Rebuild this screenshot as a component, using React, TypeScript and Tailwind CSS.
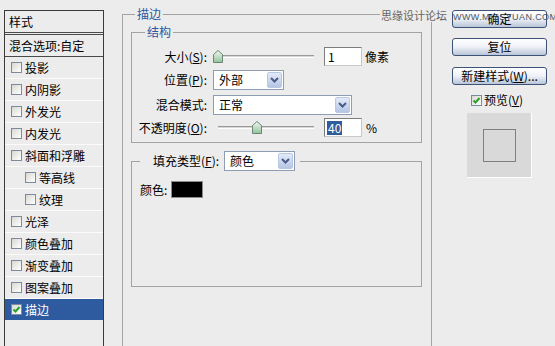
const styleItems = [
  { label: '投影' },
  { label: '内阴影' },
  { label: '外发光' },
  { label: '内发光' },
  { label: '斜面和浮雕' },
  { label: '等高线', sub: true },
  { label: '纹理', sub: true },
  { label: '光泽' },
  { label: '颜色叠加' },
  { label: '渐变叠加' },
  { label: '图案叠加' },
];

const CheckBox = ({ checked }: { checked?: boolean }) => (
  <span className="w-[11px] h-[11px] shrink-0 border border-[#7b8a9c] bg-linear-to-br from-[#d8d8d2] to-white flex items-center justify-center">
    {checked && (
      <svg width="9" height="9" viewBox="0 0 9 9">
        <path d="M1.5 4.5 L3.5 6.5 L7.5 2" fill="none" stroke="#2aa02a" strokeWidth="2" />
      </svg>
    )}
  </span>
);

const Chevron = () => (
  <svg width="9" height="6" viewBox="0 0 9 6">
    <path d="M1 1 L4.5 4.5 L8 1" fill="none" stroke="#4a5c86" strokeWidth="2" />
  </svg>
);

const Select = ({ value, width }: { value: string; width: string }) => (
  <div className={`${width} h-[20px] shrink-0 border border-[#8f9db3] bg-white flex items-center`}>
    <span className="flex-1 pl-[5px] leading-[16px]">{value}</span>
    <span className="w-[15px] h-[16px] mr-[1px] rounded-[2px] border border-[#b9c8e2] bg-linear-to-b from-[#e3ebf8] to-[#b4c5e4] flex items-center justify-center">
      <Chevron />
    </span>
  </div>
);

const Thumb = () => (
  <svg width="10" height="13" viewBox="0 0 10 13">
    <defs>
      <linearGradient id="tg" x1="0" y1="0" x2="0" y2="1">
        <stop offset="0" stopColor="#f4f8f2" />
        <stop offset="1" stopColor="#8fc49a" />
      </linearGradient>
    </defs>
    <path d="M0.5 12.5 V4.5 L5 0.5 L9.5 4.5 V12.5 Z" fill="url(#tg)" stroke="#6d8577" />
  </svg>
);

const Slider = ({ trackStart, thumbAt }: { trackStart: string; thumbAt: string }) => (
  <div className="relative w-[101px] h-[19px] shrink-0">
    <div className={`absolute ${trackStart} right-0 top-[8px] h-[3px] border-t border-[#9a9a9a] border-b border-b-white bg-[#d6d6d6]`} />
    <div className={`absolute ${thumbAt} top-[3px]`}>
      <Thumb />
    </div>
  </div>
);

const TextBox = ({ value, selected }: { value: string; selected?: boolean }) => (
  <div className="w-[38px] h-[19px] shrink-0 border border-[#7c7c7c] border-r-[#c8c8c8] border-b-[#c8c8c8] bg-white flex items-center pl-[2px]">
    <span className={selected ? 'bg-[#2f5c9c] text-white leading-[14px] px-[1px]' : 'leading-[14px] px-[1px]'}>{value}</span>
  </div>
);

const Button = ({ children, top }: { children: React.ReactNode; top: string }) => (
  <div className={`${top} w-[95px] h-[18px] rounded-[3px] border border-[#3d5277] bg-linear-to-b from-white via-[#eef1f6] to-[#b9c5d8] flex items-center justify-center leading-[14px]`}>
    {children}
  </div>
);

export default function App() {
  return (
    <div className="relative w-[555px] h-[346px] overflow-hidden bg-[#ececec] flex text-[12px] text-black font-['Noto_Sans_CJK_SC','Liberation_Sans',sans-serif]">
      {/* style list */}
      <div className="w-[104px] pl-[4px] pt-[10px] flex flex-col">
        <div className="flex-1 w-[100px] border border-b-0 border-[#3a3a3a] flex flex-col">
          <div className="h-[21px] pl-[4px] flex items-center leading-[14px]">样式</div>
          <div className="h-[3px] border-y border-[#4a4a4a]" />
          <div className="h-[22px] pl-[4px] border-b border-[#4a4a4a] flex items-center leading-[14px]">混合选项:自定</div>
          {styleItems.map((item) => (
            <div
              key={item.label}
              className={`h-[22px] border-b border-[#fbfbfb] flex items-center gap-[3px] leading-[14px] ${item.sub ? 'pl-[20px]' : 'pl-[6px]'}`}
            >
              <CheckBox />
              <span>{item.label}</span>
            </div>
          ))}
          <div className="h-[21px] bg-[#2e5b9f] text-white flex items-center gap-[3px] pl-[6px] leading-[14px]">
            <CheckBox checked />
            <span>描边</span>
          </div>
        </div>
      </div>

      {/* settings */}
      <div className="w-[328px] flex flex-col">
        <fieldset className="ml-[18px] mt-[6px] w-[310px] flex-1 min-w-0 border border-b-0 border-[#a3a3a3] p-0">
          <legend className="ml-[12px] px-[2px] leading-[16px] text-[#2c56a2]">描边</legend>

          <fieldset className="ml-[8px] mt-[2px] w-[291px] border border-[#a3a3a3] p-0 pb-[5px]">
            <legend className="ml-[13px] px-[2px] leading-[16px] text-[#2c56a2]">结构</legend>
            <div className="mt-[7px] flex flex-col">
              <div className="h-[19px] flex items-center">
                <span className="w-[75px] text-right leading-[14px]">大小(<u>S</u>):</span>
                <span className="ml-[6px]">
                  <Slider trackStart="left-[1px]" thumbAt="left-[0px]" />
                </span>
                <span className="ml-[10px]"><TextBox value="1" /></span>
                <span className="ml-[3px] leading-[14px]">像素</span>
              </div>
              <div className="mt-[4px] h-[20px] flex items-center">
                <span className="w-[75px] text-right leading-[14px]">位置(<u>P</u>):</span>
                <span className="ml-[6px]"><Select value="外部" width="w-[71px]" /></span>
              </div>
              <div className="mt-[4px] h-[21px] flex items-center">
                <span className="w-[75px] text-right leading-[14px]">混合模式:</span>
                <span className="ml-[6px]"><Select value="正常" width="w-[139px]" /></span>
              </div>
              <div className="mt-[3px] h-[19px] flex items-center">
                <span className="w-[75px] text-right leading-[14px]">不透明度(<u>O</u>):</span>
                <span className="ml-[6px]">
                  <Slider trackStart="left-[5px]" thumbAt="left-[39px]" />
                </span>
                <span className="ml-[10px]"><TextBox value="40" selected /></span>
                <span className="ml-[4px] leading-[14px]">%</span>
              </div>
            </div>
          </fieldset>

          <fieldset className="ml-[8px] mt-[8px] w-[291px] h-[136px] border border-[#a3a3a3] p-0">
            <legend className="ml-[8px] pl-[13px] pr-[5px]">
              <div className="h-[20px] flex items-center">
                <span className="leading-[14px]">填充类型(<u>F</u>):</span>
                <span className="ml-[5px]"><Select value="颜色" width="w-[71px]" /></span>
              </div>
            </legend>
            <div className="ml-[8px] mt-[10px] flex items-center gap-[4px]">
              <span className="leading-[14px]">颜色:</span>
              <div className="w-[32px] h-[17px] border border-[#8c8c8c] bg-black" />
            </div>
          </fieldset>
        </fieldset>
      </div>

      {/* buttons + preview */}
      <div className="ml-[20px] flex flex-col">
        <Button top="mt-[10px]">确定</Button>
        <Button top="mt-[10px]">复位</Button>
        <Button top="mt-[11px]">
          新建样式(<u>W</u>)...
        </Button>
        <div className="mt-[9px] ml-[19px] h-[12px] flex items-center gap-[2px]">
          <CheckBox checked />
          <span className="leading-[14px]">预览(<u>V</u>)</span>
        </div>
        <div className="mt-[7px] ml-[15px] w-[65px] h-[65px] bg-[#d9d9d9] border-r border-b border-white flex items-center justify-center">
          <div className="w-[33px] h-[33px] border border-[#7f7f7f]" />
        </div>
      </div>

      {/* watermarks */}
      <div className="absolute left-[380px] top-[9px] px-[1px] bg-[#ececec] text-[11px] leading-[13px] text-[#666]">思缘设计论坛</div>
      <div className="absolute left-[453px] top-[13px] text-[9px] leading-[9px] tracking-[0.4px] text-[#4c5462] font-['Liberation_Sans',sans-serif]">
        WWW.MISSYUAN.COM
      </div>
    </div>
  );
}
